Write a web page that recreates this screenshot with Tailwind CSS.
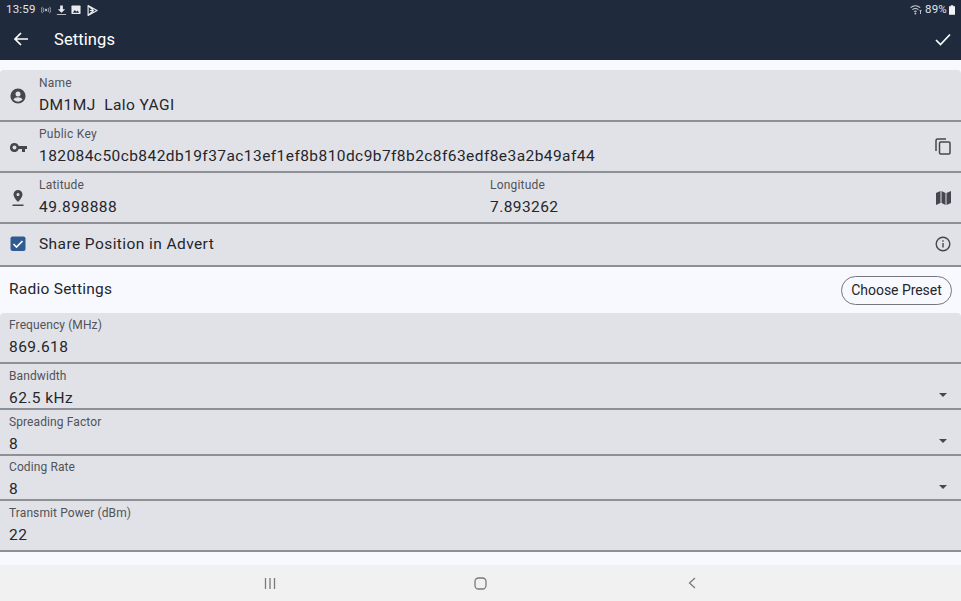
<!DOCTYPE html>
<html lang="en">
<head>
  <meta charset="UTF-8" />
  <meta name="viewport" content="width=device-width, initial-scale=1.0" />
  <title>Settings</title>
  <script src="https://cdn.jsdelivr.net/npm/@tailwindcss/browser@4"></script>
</head>
<body class="bg-[#f8f9ff] font-['Roboto',sans-serif] text-[#24262b] overflow-hidden">
  <div class="flex flex-col h-[601px] w-[961px]">
    <!-- status + app bar -->
    <header class="bg-[#1f2a3c] h-[60px] shrink-0 text-white">
      <div class="h-[20px] flex items-center justify-between pl-[6px] pr-[6px] text-[#e2e4ea] text-[11.5px] tracking-[0.2px]">
        <div class="flex items-center">
          <span>13:59</span>
          <svg class="ml-[5px]" width="10" height="8" viewBox="0 0 22 16" fill="none" stroke="#c8ccd4" stroke-width="1.6"><circle cx="11" cy="8" r="2" fill="#c8ccd4"/><path d="M6.5 3.5a6.5 6.5 0 0 0 0 9M15.5 3.5a6.5 6.5 0 0 1 0 9M3 1a10.5 10.5 0 0 0 0 14M19 1a10.5 10.5 0 0 1 0 14"/></svg>
          <svg class="ml-[5px]" width="11" height="11" viewBox="0 0 12 11" fill="#e8eaee"><path d="M4.5 0h3v4h2.5L6 8 2 4h2.5zM1 9.5h10v1H1z"/></svg>
          <svg class="ml-[4px]" width="10" height="10" viewBox="0 0 11 10"><rect width="10" height="9.5" x=".5" rx="1" fill="#e8eaee"/><path d="M2 8l2.2-3 1.6 2 1.4-1.4L9 8z" fill="#1f2a3c"/></svg>
          <svg class="ml-[6px]" width="11" height="13" viewBox="0 0 12 13" fill="none" stroke="#e8eaee" stroke-width="1.3" stroke-linejoin="round"><path d="M1.2 1.2L11 6.5l-9.8 5.3zM1.2 1.2L7 6.5l-5.8 5.3M3 6.5h4"/></svg>
        </div>
        <div class="flex items-center gap-[2px]">
          <svg width="13" height="10" viewBox="0 0 13 10" fill="none" stroke="#c8ccd4" stroke-width="1.1"><path d="M.6 2.6a7.5 7.5 0 0 1 9.6 0M2.4 4.6a5 5 0 0 1 6 0M4.2 6.5a2.5 2.5 0 0 1 2.4 0"/><circle cx="5.4" cy="8.5" r=".9" fill="#c8ccd4" stroke="none"/><path d="M10.5 5v4M9.5 6l1-1 1 1" stroke-width=".9"/></svg>
          <span>89%</span>
          <svg width="6" height="10" viewBox="0 0 7 11" fill="#f2f3f5"><path d="M2 0h3v1h2v10H0V1h2z"/></svg>
        </div>
      </div>
      <div class="h-[40px] flex items-center pl-[13px] pr-[10px]">
        <svg class="mb-[2px]" width="16" height="16" viewBox="0 0 16 16" fill="none" stroke="white" stroke-width="1.7"><path d="M15 8H2M8 2L2 8l6 6"/></svg>
        <h1 class="ml-[25px] text-[16.5px] leading-none tracking-[0.1px]">Settings</h1>
        <svg class="ml-auto mb-[2px]" width="16" height="13" viewBox="0 0 16 13" fill="none" stroke="white" stroke-width="1.7"><path d="M1 7l4.5 4.5L15 1.5"/></svg>
      </div>
    </header>

    <main class="flex-1 pt-[10px] flex flex-col">
      <!-- node identity -->
      <section class="bg-[#e1e2e8] rounded-t-[4px]">
        <div class="h-[52px] border-b-2 border-[#8e9096] flex items-center pl-[10px]">
          <svg width="16" height="16" viewBox="0 0 16 16" class="shrink-0 mt-[2px]"><circle cx="8" cy="8" r="7.6" fill="#44474e"/><circle cx="8" cy="6" r="2.5" fill="#e1e2e8"/><path d="M3.4 11.6c1-1.7 2.8-2.4 4.6-2.4s3.6.7 4.6 2.4a6 6 0 0 1-9.2 0z" fill="#e1e2e8"/></svg>
          <div class="ml-[13px] pt-[1px]">
            <div class="text-[12px] leading-[14px] text-[#505359] tracking-[0.25px]">Name</div>
            <div class="text-[15.5px] leading-[20px] mt-[5px] tracking-[0.43px]">DM1MJ&nbsp; Lalo YAGI</div>
          </div>
        </div>
        <div class="h-[51px] border-b-2 border-[#8e9096] flex items-center pl-[10px] pr-[10px]">
          <svg width="17" height="9" viewBox="0 0 17 9" class="shrink-0 mt-[2px]"><path fill-rule="evenodd" d="M4.5 0a4.5 4.5 0 0 1 4.2 3H17v3h-2v3h-3V6H8.7A4.5 4.5 0 1 1 4.500 0zm0 2.500a2 2 0 1 0 0 4 2 2 0 0 0 0-4z" fill="#44474e"/></svg>
          <div class="ml-[12px] pb-[1px]">
            <div class="text-[12px] leading-[14px] text-[#505359] tracking-[0.25px]">Public Key</div>
            <div class="text-[15.5px] leading-[20px] mt-[5px] tracking-[0.43px]">182084c50cb842db19f37ac13ef1ef8b810dc9b7f8b2c8f63edf8e3a2b49af44</div>
          </div>
          <svg class="ml-auto" width="16" height="17" viewBox="0 0 16 17" fill="none" stroke="#44474e" stroke-width="1.5"><path d="M11 1H2.500A1.500 1.500 0 0 0 1 2.500V13"/><rect x="4.500" y="4" width="10.500" height="12" rx="1.200"/></svg>
        </div>
        <div class="h-[51px] border-b-2 border-[#8e9096] flex items-center pl-[10px] pr-[10px]">
          <svg width="16" height="16" viewBox="0 0 16 16" class="shrink-0"><path fill-rule="evenodd" d="M8 0a4.500 4.500 0 0 1 4.500 4.500C12.500 7.800 8 12 8 12S3.500 7.800 3.500 4.500A4.500 4.500 0 0 1 8 0zm0 3a1.500 1.500 0 1 0 0 3 1.500 1.500 0 0 0 0-3z" fill="#44474e"/><path d="M2.500 14.500h11V16h-11z" fill="#44474e"/></svg>
          <div class="ml-[13px] w-[451px] pb-[1px]">
            <div class="text-[12px] leading-[14px] text-[#505359] tracking-[0.2px]">Latitude</div>
            <div class="text-[15.5px] leading-[20px] mt-[5px] tracking-[0.5px]">49.898888</div>
          </div>
          <div class="pb-[1px]">
            <div class="text-[12px] leading-[14px] text-[#505359] tracking-[0.2px]">Longitude</div>
            <div class="text-[15.5px] leading-[20px] mt-[5px] tracking-[0.43px]">7.893262</div>
          </div>
          <svg class="ml-auto" width="15" height="14" viewBox="0 0 15 14" fill="#44474e"><path d="M0 2l4.500-2v12L0 14zM5.500 0l4 2v12l-4-2zM10.500 2L15 0v12l-4.500 2z"/></svg>
        </div>
        <div class="h-[43px] border-b-2 border-[#8e9096] flex items-center pl-[10px] pr-[10px]">
          <svg width="16" height="16" viewBox="0 0 16 16" class="shrink-0 mb-[2px]"><rect x=".5" y=".5" width="15" height="14.5" rx="2" fill="#2f5a92"/><path d="M3.500 8l3 3 6-6" fill="none" stroke="white" stroke-width="1.6"/></svg>
          <span class="ml-[13px] text-[15.5px] tracking-[0.42px]">Share Position in Advert</span>
          <svg class="ml-auto mb-[2px]" width="16" height="16" viewBox="0 0 16 16" fill="none" stroke="#44474e" stroke-width="1.4"><circle cx="8" cy="8" r="6.8"/><path d="M8 7v4.500M8 4.200v1.500"/></svg>
        </div>
      </section>

      <!-- radio settings -->
      <div class="h-[46px] flex items-center justify-between pl-[9px] pr-[9px]">
        <h2 class="text-[15.5px] tracking-[0.25px]">Radio Settings</h2>
        <button class="h-[29px] w-[111px] rounded-full border border-[#74777f] text-[14px] tracking-[-0.05px] text-center">Choose Preset</button>
      </div>
      <section class="bg-[#e1e2e8] rounded-t-[4px]">
        <div class="pl-[9px] h-[51px] border-b-2 border-[#8e9096] flex flex-col justify-center">
          <div class="text-[12px] leading-[14px] text-[#505359] tracking-[0.1px]">Frequency (MHz)</div>
          <div class="text-[15.5px] leading-[20px] mt-[5px] tracking-[0.43px]">869.618</div>
        </div>
        <div class="pl-[9px] pr-[14px] pt-[4px] h-[46px] border-b-2 border-[#8e9096] flex items-center justify-between">
          <div>
            <div class="text-[12px] leading-[14px] text-[#505359] tracking-[0.1px]">Bandwidth</div>
            <div class="text-[15.5px] leading-[20px] mt-[5px] tracking-[0.43px]">62.5 kHz</div>
          </div>
          <svg class="mt-[14px]" width="8" height="4" viewBox="0 0 8 4" fill="#44474e"><path d="M0 0h8L4 4z"/></svg>
        </div>
        <div class="pl-[9px] pr-[14px] pt-[4px] h-[46px] border-b-2 border-[#8e9096] flex items-center justify-between">
          <div>
            <div class="text-[12px] leading-[14px] text-[#505359] tracking-[0.1px]">Spreading Factor</div>
            <div class="text-[15.5px] leading-[20px] mt-[5px] tracking-[0.43px]">8</div>
          </div>
          <svg class="mt-[14px]" width="8" height="4" viewBox="0 0 8 4" fill="#44474e"><path d="M0 0h8L4 4z"/></svg>
        </div>
        <div class="pl-[9px] pr-[14px] pt-[4px] h-[45px] border-b-2 border-[#8e9096] flex items-center justify-between">
          <div>
            <div class="text-[12px] leading-[14px] text-[#505359] tracking-[0.1px]">Coding Rate</div>
            <div class="text-[15.5px] leading-[20px] mt-[5px] tracking-[0.43px]">8</div>
          </div>
          <svg class="mt-[14px]" width="8" height="4" viewBox="0 0 8 4" fill="#44474e"><path d="M0 0h8L4 4z"/></svg>
        </div>
        <div class="pl-[9px] h-[51px] border-b-2 border-[#8e9096] flex flex-col justify-center">
          <div class="text-[12px] leading-[14px] text-[#505359] tracking-[0.1px]">Transmit Power (dBm)</div>
          <div class="text-[15.5px] leading-[20px] mt-[5px] tracking-[0.43px]">22</div>
        </div>
      </section>
    </main>

    <!-- android nav -->
    <nav class="bg-[#f1f1f1] h-[36px] shrink-0 flex items-center justify-center">
      <div class="w-[211px] flex justify-center">
        <svg width="12" height="11" viewBox="0 0 12 11" stroke="#7a7a7a" stroke-width="1.3"><path d="M1.500 0v11M6 0v11M10.500 0v11"/></svg>
      </div>
      <div class="w-[211px] flex justify-center">
        <svg width="13" height="13" viewBox="0 0 13 13" fill="none" stroke="#7a7a7a" stroke-width="1.3"><rect x="1" y="1" width="11" height="11" rx="3.5"/></svg>
      </div>
      <div class="w-[211px] flex justify-center">
        <svg width="8" height="12" viewBox="0 0 8 12" fill="none" stroke="#7a7a7a" stroke-width="1.3"><path d="M7 1L1.500 6 7 11"/></svg>
      </div>
    </nav>
  </div>
</body>
</html>
